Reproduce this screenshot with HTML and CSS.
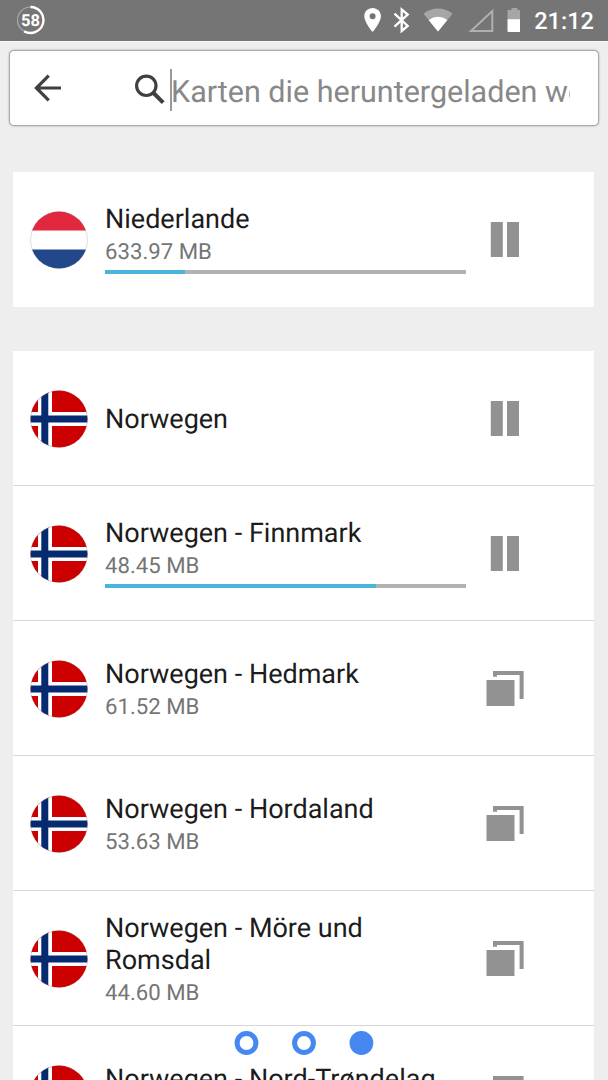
FILE: index.html
```html
<!DOCTYPE html>
<html lang="de">
<head>
<meta charset="utf-8">
<title>Karten</title>
<link rel="stylesheet" href="styles.css">
</head>
<body>
<svg class="defs" width="0" height="0">
  <defs>
    <clipPath id="disc"><circle cx="29" cy="29" r="28.5"/></clipPath>
    <symbol id="no" viewBox="0 0 58 58">
      <g clip-path="url(#disc)">
        <rect width="58" height="58" fill="#cc0000"/>
        <path d="M8 0h14v58H8zM0 22h58v14H0z" fill="#fff"/>
        <path d="M11.3 0h7v58h-7zM0 25.500h58v7H0z" fill="#062a70"/>
      </g>
      <circle cx="29" cy="29" r="28.400" fill="none" stroke="#777" stroke-opacity=".3" stroke-width=".7"/>
    </symbol>
    <symbol id="nl" viewBox="0 0 58 58">
      <g clip-path="url(#disc)">
        <rect width="58" height="58" fill="#fff"/>
        <rect width="58" height="19.500" fill="#e1283f"/>
        <rect y="38.500" width="58" height="20" fill="#22478b"/>
      </g>
      <circle cx="29" cy="29" r="28.400" fill="none" stroke="#777" stroke-opacity=".35" stroke-width=".7"/>
    </symbol>
    <symbol id="pause" viewBox="0 0 40 40"><path d="M5.800 3h12v35h-12zM22 3h12v35H22z" fill="#929292"/></symbol>
    <symbol id="stack" viewBox="0 0 40 40"><path d="M1.500 12h28v26h-28zM8 3h30.600v28h-4V7H12v1.700H8z" fill="#929292"/></symbol>
  </defs>
</svg>
<div class="screen">
  <header class="status">
    <svg class="load" width="30" height="30" viewBox="0 0 30 30">
      <circle cx="14.500" cy="15" r="13" fill="none" stroke="#aaa" stroke-width="1.200"/>
      <path d="M14.500 2A13 13 0 1 1 8.200 26.400" fill="none" stroke="#fff" stroke-width="2.400"/>
      <text x="14.500" y="20.800" text-anchor="middle" class="load-text">58</text>
    </svg>
    <svg class="tray" width="160" height="40" viewBox="360 0 160 40">
      <path fill="#fff" fill-rule="evenodd" d="M372.600 8c-4.700 0-8.300 3.600-8.300 8.200 0 6.100 8.300 15.800 8.300 15.800s8.300-9.700 8.300-15.800c0-4.600-3.600-8.200-8.300-8.200zm0 5.200a3 3 0 1 1 0 6 3 3 0 0 1 0-6z"/>
      <path d="M394.500 13.700L407.700 26l-6 5V9.500l6 5L394.500 26.700" fill="none" stroke="#fff" stroke-width="2.300"/>
      <path d="M423.500 13.700Q438 3.500 452.500 13.700L438 31.500z" fill="#a6a6a6"/>
      <path d="M428.600 20Q438 13.500 447.400 20L438 31.500z" fill="#fff"/>
      <path d="M471 31L492.300 11v20z" fill="none" stroke="#b0b0b0" stroke-width="2"/>
      <path d="M507.500 10h4V8h6v2h4v10h-14z" fill="#a6a6a6"/>
      <path d="M507.500 19.200h14V31q0 1-1 1h-12q-1 0-1-1z" fill="#fff"/>
    </svg>
    <span class="clock">21:12</span>
  </header>

  <div class="search">
    <svg class="back" width="30" height="30" viewBox="0 0 30 30"><path d="M28 15H4M15.700 2.700L3.400 15l12.300 12.300" fill="none" stroke="#404040" stroke-width="3.200"/></svg>
    <svg class="lens" width="32" height="32" viewBox="0 0 32 32"><circle cx="12.300" cy="11.800" r="9.700" fill="none" stroke="#404040" stroke-width="3.200"/><path d="M19 18.500L29.200 28.600" stroke="#404040" stroke-width="4"/></svg>
    <div class="field"><span class="hint">Karten die heruntergeladen werden</span></div>
  </div>

  <main class="lists">
    <section class="card">
      <div class="row">
        <svg class="flag"><use href="#nl"/></svg>
        <div class="info loading"><div class="name">Niederlande</div><div class="size">633.97 MB</div><div class="bar"><div class="fill" style="width:22.200%"></div></div></div>
        <svg class="action"><use href="#pause"/></svg>
      </div>
    </section>
    <section class="card">
      <div class="row">
        <svg class="flag"><use href="#no"/></svg>
        <div class="info"><div class="name">Norwegen</div></div>
        <svg class="action"><use href="#pause"/></svg>
      </div>
      <div class="row">
        <svg class="flag"><use href="#no"/></svg>
        <div class="info loading"><div class="name">Norwegen - Finnmark</div><div class="size">48.45 MB</div><div class="bar"><div class="fill" style="width:75%"></div></div></div>
        <svg class="action"><use href="#pause"/></svg>
      </div>
      <div class="row">
        <svg class="flag"><use href="#no"/></svg>
        <div class="info"><div class="name">Norwegen - Hedmark</div><div class="size">61.52 MB</div></div>
        <svg class="action"><use href="#stack"/></svg>
      </div>
      <div class="row">
        <svg class="flag"><use href="#no"/></svg>
        <div class="info"><div class="name">Norwegen - Hordaland</div><div class="size">53.63 MB</div></div>
        <svg class="action"><use href="#stack"/></svg>
      </div>
      <div class="row">
        <svg class="flag"><use href="#no"/></svg>
        <div class="info"><div class="name">Norwegen - Möre und Romsdal</div><div class="size">44.60 MB</div></div>
        <svg class="action"><use href="#stack"/></svg>
      </div>
      <div class="row">
        <svg class="flag"><use href="#no"/></svg>
        <div class="info"><div class="name">Norwegen - Nord-Trøndelag</div><div class="size">50.12 MB</div></div>
        <svg class="action"><use href="#stack"/></svg>
      </div>
    </section>
  </main>

  <svg class="pager" width="144" height="26" viewBox="0 0 144 26">
    <g fill="#fff" stroke="#4688f1" stroke-width="5">
      <circle cx="14.500" cy="13" r="9.400"/>
      <circle cx="72" cy="13" r="9.400"/>
      <circle cx="129.400" cy="13" r="9.400" fill="#4688f1"/>
    </g>
  </svg>
</div>
</body>
</html>
```
FILE: styles.css
```css
* { box-sizing: border-box; }
body { margin: 0; font-family: Roboto, "Noto Sans", sans-serif; text-rendering: geometricPrecision; }
.defs { position: absolute; }
.screen {
  position: relative;
  width: 608px;
  height: 1080px;
  overflow: hidden;
  background: #eee;
}
.status {
  display: flex;
  align-items: center;
  height: 41px;
  padding: 0 14px 0 16px;
  background: #757575;
  border-bottom: 1px solid #777;
  box-shadow: 0 1px 0 #fafafa;
}
.load-text { font-size: 16.500px; font-weight: 700; fill: #fff; }
.tray { margin-left: auto; }
.clock {
  width: 74px;
  padding-top: 2px;
  text-align: right;
  font-size: 23.600px;
  font-weight: 500;
  color: #fff;
  white-space: nowrap;
}
.search {
  display: flex;
  align-items: center;
  height: 76px;
  margin: 9px 9px 0;
  padding: 0 28px 0 22px;
  background: #fff;
  border: 1px solid #aaa;
  border-radius: 5px;
  box-shadow: 0 0 2px #999;
}
.back { margin: -1px 0 0 1px; }
.lens { margin: 3px 0 0 71px; }
.field {
  flex: 1;
  min-width: 0;
  height: 42px;
  margin: 3px 0 0 4px;
  border-left: 2px solid #999;
  overflow: hidden;
  white-space: nowrap;
}
.hint { margin-left: -1px; font-size: 30.500px; line-height: 48px; color: #888; }
.lists {
  display: flex;
  flex-direction: column;
  gap: 44px;
  padding: 46px 14px 0 13px;
}
.card { background: #fff; }
.row {
  display: flex;
  align-items: center;
  height: 135px;
  padding-left: 17px;
  border-bottom: 1px solid #d6d6d6;
}
.row:last-child { border-bottom-color: transparent; }
.flag { flex: none; width: 58px; height: 58px; margin-top: 1px; }
.info { width: 361px; margin: 0 19px 0 17px; padding-top: 2px; }
.name { font-size: 27px; line-height: 32px; color: #1c1c1c; }
.size { margin-top: 4px; font-size: 22.200px; line-height: 26px; color: #757575; }
.loading { padding-top: 1px; }
.bar { height: 4px; margin: 5px 0 2px; background: #b2b2b2; }
.fill { height: 4px; background: #49b4dc; }
.action { flex: none; width: 40px; height: 40px; }
.pager {
  position: absolute;
  left: 232px;
  top: 1030px;
}
```
